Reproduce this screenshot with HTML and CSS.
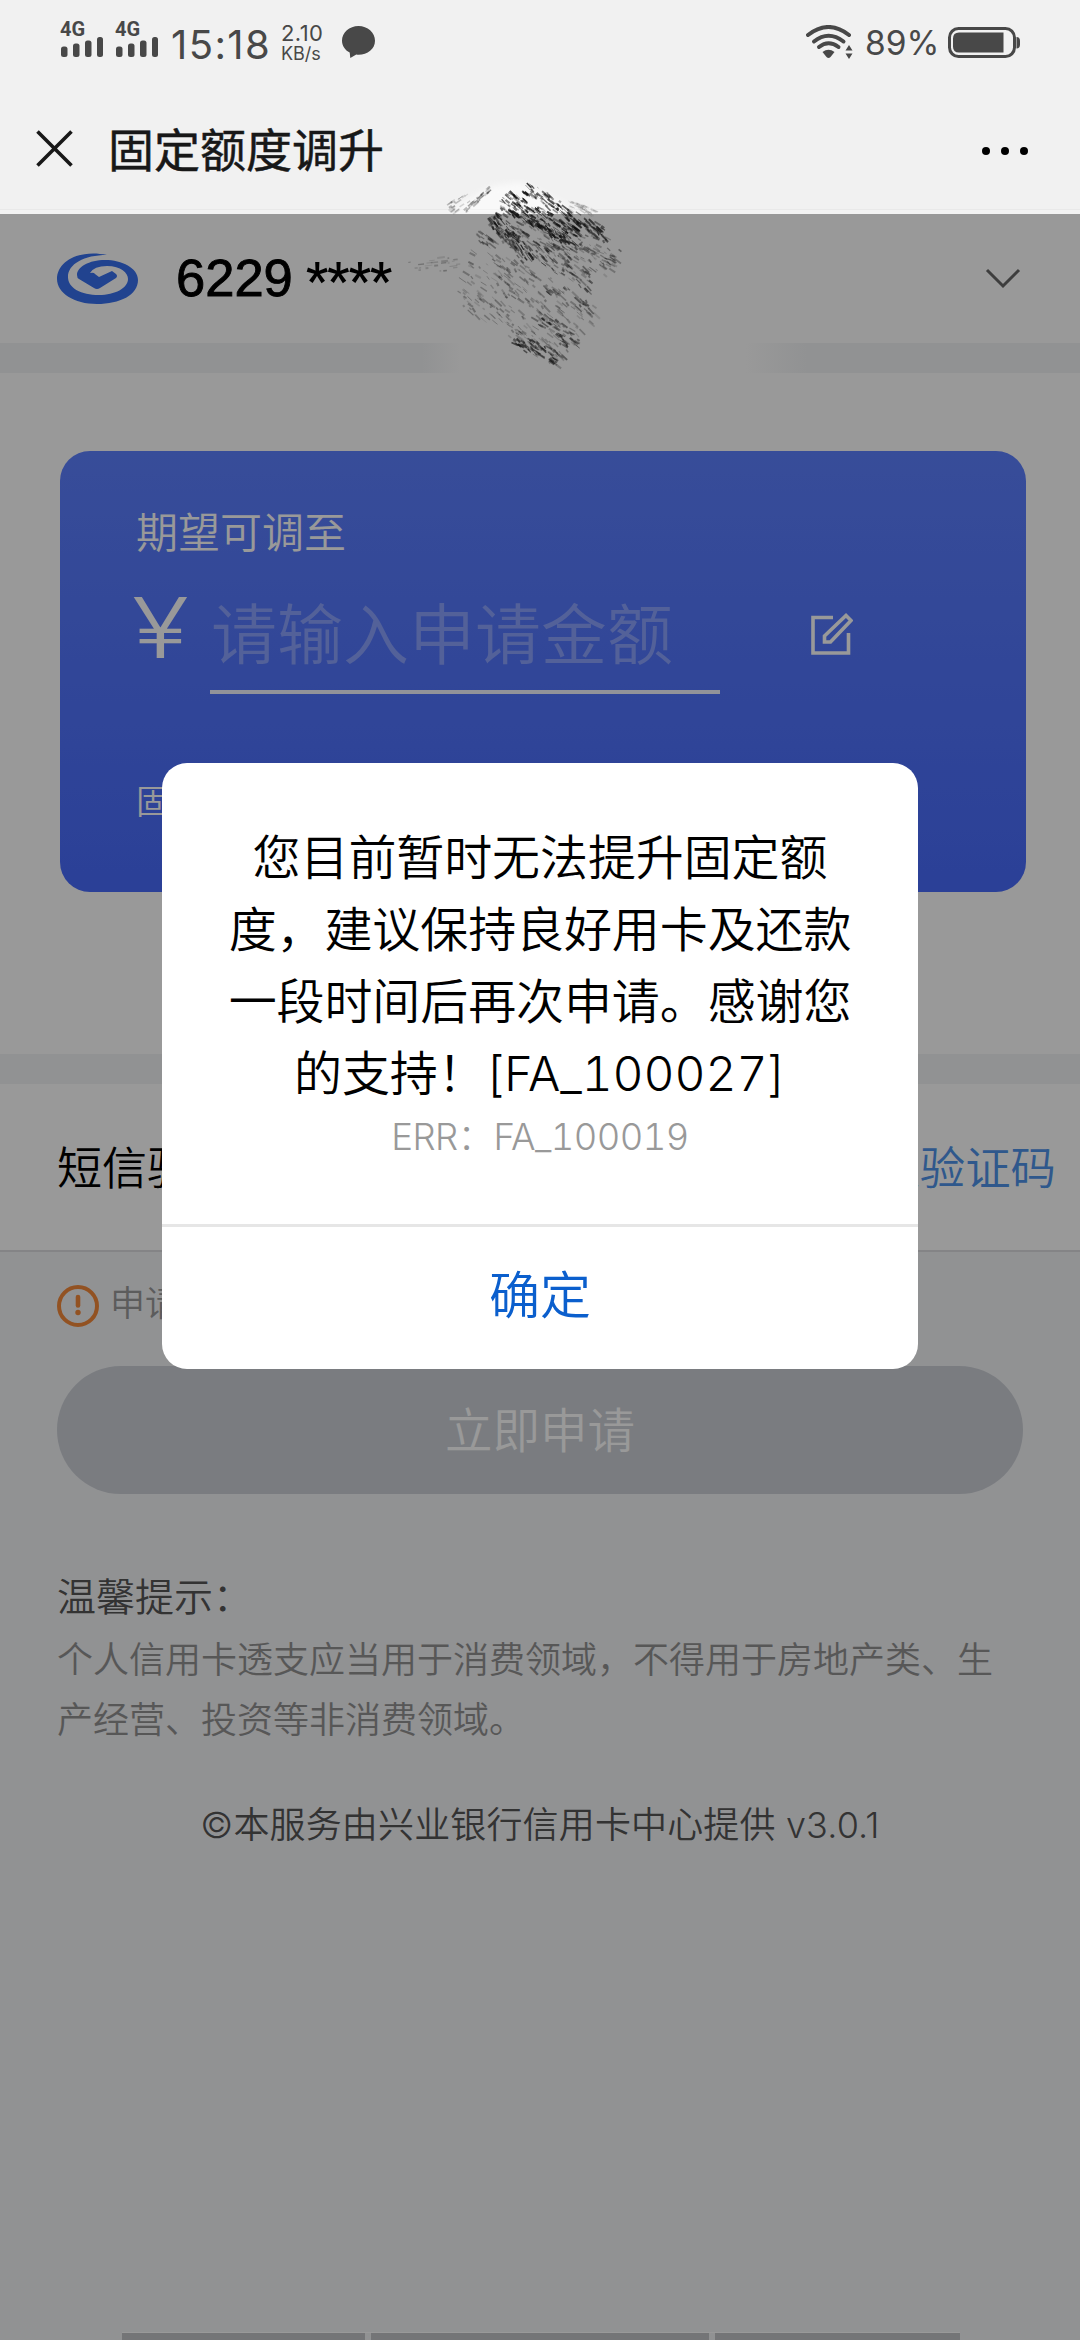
FILE: index.html
```html
<!DOCTYPE html>
<html lang="zh-CN">
<head>
<meta charset="utf-8">
<title>固定额度调升</title>
<link rel="stylesheet" href="styles.css">
</head>
<body>
<div class="screen">
  <header class="top">
    <div class="status">
      <div class="net"><span class="net-label">4G</span><svg width="42" height="20" viewBox="0 0 42 20"><rect x="0" y="9.500" width="6.500" height="10.500" rx="2.500"/><rect x="12" y="6.500" width="6.500" height="13.500" rx="2.500"/><rect x="24" y="3.500" width="6.500" height="16.500" rx="2.500"/><rect x="36" y="0" width="6" height="20" rx="2.500"/></svg></div>
      <div class="net"><span class="net-label">4G</span><svg width="42" height="20" viewBox="0 0 42 20"><rect x="0" y="9.500" width="6.500" height="10.500" rx="2.500"/><rect x="12" y="6.500" width="6.500" height="13.500" rx="2.500"/><rect x="24" y="3.500" width="6.500" height="16.500" rx="2.500"/><rect x="36" y="0" width="6" height="20" rx="2.500"/></svg></div>
      <span class="clock">15:18</span>
      <div class="speed"><span class="speed-num">2.10</span><span class="speed-unit">KB/s</span></div>
      <svg class="bubble" width="33" height="32" viewBox="0 0 33 32"><path d="M16.500 0C7.400 0 0 6.500 0 14.700c0 5 3 9.300 7.700 11.900L8.300 32l6-3.600c1 .2 1.500.3 2.200.3C25.600 28.700 33 23 33 14.700S25.600 0 16.500 0z"/></svg>
      <div class="grow"></div>
      <svg class="wifi" width="47" height="34" viewBox="0 0 47 34"><g fill="none" stroke="#484848" stroke-width="4" stroke-linecap="round"><path d="M2 10Q22.500-6 43 10"/><path d="M8 16.500q14.500-11.500 29.500 0"/><path d="M13 22q9.500-7.500 19.500 0"/></g><path d="M16.500 27q6-4.500 12 0l-4 5q-2 2-4 0z"/><path d="M39.500 25.500h7L43 20zM39.500 28.500h7L43 34z"/></svg>
      <span class="pct">89%</span>
      <svg class="battery" width="72" height="31" viewBox="0 0 72 31"><rect x="1.500" y="1.500" width="65" height="28" rx="9" fill="none" stroke="#484848" stroke-width="3"/><path d="M11 5.500h44.500v20H11q-6 0-6-6v-8q0-6 6-6z"/><path d="M68.500 10q3.500 0 3.500 4v3.500q0 4-3.500 4z"/></svg>
    </div>
    <nav class="nav">
      <svg class="close" width="37" height="37" viewBox="0 0 37 37"><path d="M1.500 1.500l34 34M35.500 1.500l-34 34" stroke="#181818" stroke-width="3.600"/></svg>
      <h1 class="title">固定额度调升</h1>
      <svg class="more" width="46" height="8" viewBox="0 0 46 8"><circle cx="4" cy="4" r="4"/><circle cx="23" cy="4" r="4"/><circle cx="42" cy="4" r="4"/></svg>
    </nav>
  </header>

  <main class="page">
    <section class="account">
      <svg class="logo" width="81" height="51" viewBox="0 0 81 51"><path fill="#3870ee" d="M50 2C23-4 0 8 0 26c0 14 17 25 40 25s41-9 41-24C81 15 65 7 48 7 32 7 20 14 20 22q0 3 2 4l15 9q3 2 6 0l16-10q2-2 0-4l-4-3-13 6-4-3q-1-2-5-1 4-7 17-7c14 0 21 7 21 13 0 9-13 16-29 16-18 0-31-7-31-18C11 11 27 2 50 2z"/></svg>
      <span class="number">6229</span><span class="stars">****</span>
      <div class="grow"></div>
      <svg class="chevron" width="36" height="21" viewBox="0 0 36 21"><path d="M2 2l16 16L34 2" fill="none" stroke="#666" stroke-width="3"/></svg>
    </section>
    <div class="band"></div>
    <section class="quota">
      <div class="card">
        <div class="card-label">期望可调至</div>
        <div class="amount"><span class="yen">¥</span><span class="field">请输入申请金额</span>
          <svg class="edit" width="42" height="42" viewBox="0 0 42 42"><g fill="none" stroke="#fff" stroke-width="3.600"><path d="M22 4.500H2v35.500h35.500V20"/><path d="M13.500 29v-6L35 2.500 40 7.500 19.500 29z"/></g></svg>
        </div>
        <div class="card-note">固定额度</div>
      </div>
    </section>
    <div class="band"></div>
    <section class="sms"><span>短信验证码</span><span class="get-code">获取验证码</span></section>
    <div class="hint"><svg width="42" height="42" viewBox="0 0 42 42"><circle cx="21" cy="21" r="19" fill="none" stroke="#f3893a" stroke-width="4"/><path d="M21 12v8.500" stroke="#f3893a" stroke-width="4.600" stroke-linecap="round"/><circle cx="21" cy="27.500" r="2.700" fill="#f3893a"/></svg><span>申请</span></div>
    <div class="apply">立即申请</div>
    <section class="tips">
      <div class="tips-title">温馨提示：</div>
      <p class="tips-text">个人信用卡透支应当用于消费领域，不得用于房地产类、生产经营、投资等非消费领域。</p>
    </section>
    <footer class="foot">©本服务由兴业银行信用卡中心提供 v3.0.1</footer>
    <div class="grow"></div>
    <div class="pill"><i></i><i class="mid"></i><i></i></div>
  </main>

  <div class="mask">
    <div class="dialog">
      <div class="dialog-body">
        <p class="message">您目前暂时无法提升固定额度，建议保持良好用卡及还款一段时间后再次申请。感谢您的支持！[FA_100027]</p>
        <p class="error">ERR：FA_100019</p>
      </div>
      <div class="confirm">确定</div>
    </div>
  </div>
  <svg class="scribble" width="440" height="230" viewBox="0 0 440 230"></svg>
</div>
<script src="scribble.js"></script>
</body>
</html>
```
FILE: styles.css
```css
* { box-sizing: border-box; }
body { margin: 0; font-family: Inter, "Noto Sans CJK SC", sans-serif; background: #f1f1f1; }
h1, p { margin: 0; font-weight: inherit; }
svg { display: block; flex: none; }
.screen { position: relative; width: 1080px; height: 2340px; overflow: hidden; display: flex; flex-direction: column; }
.grow { flex: 1; }

.top { height: 214px; background: #f1f1f1; border-bottom: 4px solid #f3f3f3; }
.status { display: flex; height: 88px; padding: 0 60px 0 61px; color: #484848; fill: #484848; }
.net { width: 42px; margin-right: 13px; padding-top: 20px; }
.net-label { display: block; height: 17px; margin-left: -1px; font: 700 20px/18px Roboto, sans-serif; }
.clock { width: 110px; font-size: 40px; line-height: 90px; letter-spacing: 1.400px; white-space: nowrap; }
.speed { width: 61px; padding-top: 20px; display: flex; flex-direction: column; }
.speed-num { font-size: 22px; line-height: 26px; letter-spacing: .4px; }
.speed-unit { font-size: 18px; line-height: 16px; }
.bubble { margin-top: 26px; }
.wifi { margin: 25px 12px 0 0; }
.pct { width: 83px; font-size: 33.500px; line-height: 87px; }
.battery { margin-top: 27px; }
.nav { display: flex; align-items: center; height: 122px; padding: 0 52px 0 36px; border-bottom: 1px solid #e9e9e9; }
.title { flex: 1; margin-left: 35px; padding-top: 3px; font-size: 46px; line-height: 60px; font-weight: 400; color: #181818; -webkit-text-stroke: .5px #181818; }
.more { margin-top: 4px; }

.page { flex: 1; display: flex; flex-direction: column; background: #f2f3f5; }
.account { display: flex; align-items: center; height: 129px; padding: 0 59px 0 57px; background: #fff; }
.number { width: 129px; margin: -2px 0 0 38px; font-family: "Liberation Sans", Arial, sans-serif; font-size: 52.500px; letter-spacing: 0; -webkit-text-stroke: .9px #000; }
.stars { margin: 4px 0 0 1px; font-family: Roboto, sans-serif; font-size: 50px; font-weight: 500; letter-spacing: -.8px; }
.band { height: 30px; background: #f2f3f5; flex: none; }
.quota { height: 681px; padding: 78px 54px 0 60px; background: #fff; }
.card { height: 441px; padding: 52px 76px; border-radius: 30px; background: linear-gradient(#5d80ff, #486bfc); color: #fff; font-weight: 350; }
.card-label { font-size: 42px; line-height: 60px; }
.amount { display: flex; height: 131px; }
.yen { width: 78px; margin-left: -4px; font-size: 84px; line-height: 129px; font-weight: 300; transform: scaleX(1.25); transform-origin: 0 0; }
.field { width: 510px; margin-right: 91px; padding-left: 1px; border-bottom: 4px solid #f4f6ff; font-size: 66px; line-height: 144px; color: #8ba2ff; }
.edit { margin-top: 50px; }
.card-note { margin-top: 84px; font-size: 34px; line-height: 48px; }
.sms { display: flex; justify-content: space-between; height: 168px; padding: 0 24px 0 57px; background: #fff; border-bottom: 2px solid #dcdde0; font-size: 45px; line-height: 170px; font-weight: 350; color: #000; }
.get-code { color: #4f93ea; font-size: 45.400px; }
.hint { display: flex; height: 114px; padding: 33px 57px 0; font-size: 35px; line-height: 37px; color: #999; font-weight: 350; }
.hint span { margin-left: 11px; }
.apply { height: 128px; margin: 0 57px; border-radius: 64px; background: #cbcfd6; color: #fff; text-align: center; font-size: 47.500px; line-height: 130px; font-weight: 350; }
.tips { padding: 73px 57px 0; font-weight: 350; }
.tips-title { font-size: 39px; line-height: 60px; color: #555; }
.tips-text { margin-top: 3px; font-size: 36px; line-height: 60px; color: #929292; }
.foot { margin-top: 45px; text-align: center; font-size: 36px; line-height: 60px; color: #555; font-weight: 350; letter-spacing: .15px; }
.pill { display: grid; grid-template-columns: 243px 338px 245px; gap: 6px; width: 838px; margin-left: 122px; height: 8px; border-top: 1px solid #ffffff; }
.pill i { background: #c1c3c6; }

.mask { position: absolute; inset: 214px 0 0; background: rgba(0, 0, 0, .4); }
.dialog { width: 756px; height: 606px; margin: 549px 0 0 162px; border-radius: 25px; background: #fff; text-align: center; display: flex; flex-direction: column; }
.dialog-body { height: 464px; padding: 59px 65px 0; border-bottom: 3px solid #e6e6e6; }
.message { font-size: 48px; line-height: 72px; font-weight: 350; color: #000; letter-spacing: -.1px; font-variant-numeric: tabular-nums; }
.error { font-size: 36.500px; line-height: 54px; font-weight: 300; color: #999; letter-spacing: -.6px; font-variant-numeric: tabular-nums; }
.confirm { font-size: 51px; line-height: 137px; color: #0b5fcd; font-weight: 350; }
.scribble { position: absolute; left: 380px; top: 170px; }
```
FILE: scribble.js
```js
// Dry-brush scribble: bundles of short broken strokes with a fixed seed.
const svg = document.querySelector('.scribble');
let seed = 7;
const rnd = () => (seed = (seed * 16807) % 2147483647) / 2147483647;
let out = '<defs><linearGradient id="fade"><stop offset="0" stop-color="#999" stop-opacity="0"/><stop offset=".1" stop-color="#999"/><stop offset=".84" stop-color="#999"/><stop offset="1" stop-color="#999" stop-opacity="0"/></linearGradient><filter id="soft"><feGaussianBlur stdDeviation="3"/></filter></defs>' +
  '<rect x="42" y="172" width="385" height="32" fill="url(#fade)"/>' +
  '<path d="M68 42L112 16 140 12 180 32 200 42z" fill="#fff" opacity=".6" filter="url(#soft)"/>' +
  '<path d="M60 44H210V60H60z" fill="#999"/>';

// x1, y1, x2, y2: axis of a bundle; w: its breadth; n: strokes; a: darkness
function bundle(x1, y1, x2, y2, w, n, a) {
  const len = Math.hypot(x2 - x1, y2 - y1), ux = (x2 - x1) / len, uy = (y2 - y1) / len;
  for (let i = 0; i < n; i++) {
    const off = (rnd() - .5) * w, start = rnd() * len * .94, l = 1.5 + rnd() * 6.5;
    const x = x1 + ux * start - uy * off, y = y1 + uy * start + ux * off;
    const t = uy < 0 ? 0 : rnd() * 2.5;
    out += `<path d="M${x.toFixed(1)} ${y.toFixed(1)}l${(ux * l).toFixed(1)} ${(uy * l + t).toFixed(1)}" stroke="#111" stroke-width="${(.8 + rnd() * 1.4).toFixed(1)}" opacity="${(a * (.3 + rnd() * .7)).toFixed(2)}"/>`;
  }
}
bundle(143, 15, 230, 68, 12, 110, .8);
bundle(122, 28, 200, 70, 20, 190, .85);
bundle(112, 42, 245, 88, 30, 110, .5);
bundle(110, 46, 150, 90, 16, 75, .8);
bundle(128, 62, 215, 115, 20, 110, .55);
bundle(150, 60, 235, 100, 26, 70, .4);
bundle(85, 90, 150, 120, 40, 55, .4);
bundle(78, 120, 190, 190, 24, 95, .35);
bundle(110, 100, 210, 165, 44, 100, .36);
bundle(165, 112, 212, 142, 16, 40, .5);
bundle(150, 148, 200, 172, 20, 55, .55);
bundle(133, 168, 180, 190, 14, 70, .65);
bundle(96, 64, 112, 72, 10, 20, .5);
bundle(28, 98, 80, 92, 14, 24, .3);
bundle(68, 42, 88, 28, 14, 22, .3);
bundle(84, 42, 110, 19, 4, 34, .35);
bundle(185, 34, 215, 42, 8, 30, .22);
svg.innerHTML = out;
```
